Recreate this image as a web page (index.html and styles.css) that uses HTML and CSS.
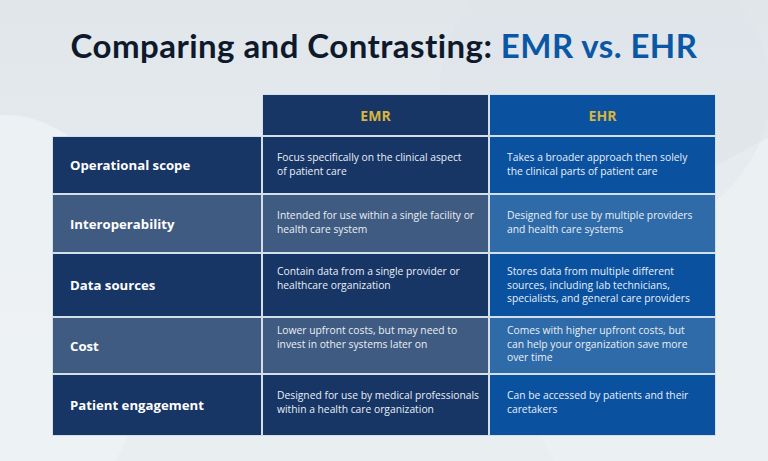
FILE: index.html
```html
<!DOCTYPE html>
<html lang="en">
<head>
<meta charset="utf-8">
<title>Comparing and Contrasting: EMR vs. EHR</title>
<link rel="stylesheet" href="styles.css">
</head>
<body>
<main class="page">
  <div class="bg-shape shape-a"></div>
  <div class="bg-shape shape-b"></div>
  <div class="bg-shape shape-c"></div>
  <h1 class="title">Comparing and Contrasting: <span class="accent">EMR vs. EHR</span></h1>
  <div class="table">
    <div class="corner"></div>
    <div class="cell head emr">EMR</div>
    <div class="cell head ehr">EHR</div>

    <div class="cell label dark">Operational scope</div>
    <div class="cell txt dark r1">Focus specifically on the clinical aspect<br>of patient care</div>
    <div class="cell txt ehr r1">Takes a broader approach then solely<br>the clinical parts of patient care</div>

    <div class="cell label light">Interoperability</div>
    <div class="cell txt light r2">Intended for use within a single facility or<br>health care system</div>
    <div class="cell txt ehr-light r2">Designed for use by multiple providers<br>and health care systems</div>

    <div class="cell label dark">Data sources</div>
    <div class="cell txt dark r3">Contain data from a single provider or<br>healthcare organization</div>
    <div class="cell txt ehr r3">Stores data from multiple different<br>sources, including lab technicians,<br>specialists, and general care providers</div>

    <div class="cell label light">Cost</div>
    <div class="cell txt light r4">Lower upfront costs, but may need to<br>invest in other systems later on</div>
    <div class="cell txt ehr-light r4">Comes with higher upfront costs, but<br>can help your organization save more<br>over time</div>

    <div class="cell label dark">Patient engagement</div>
    <div class="cell txt dark r5">Designed for use by medical professionals<br>within a health care organization</div>
    <div class="cell txt ehr r5">Can be accessed by patients and their<br>caretakers</div>
  </div>
</main>
</body>
</html>
```
FILE: styles.css
```css
* { box-sizing: border-box; }
html, body { margin: 0; padding: 0; }
body {
  width: 768px;
  height: 461px;
  overflow: hidden;
  font-family: "Open Sans", "Liberation Sans", sans-serif;
}
.page {
  position: relative;
  width: 768px;
  height: 461px;
  overflow: hidden;
  background: linear-gradient(180deg, #e0e6ea 0%, #e5ebee 50%, #e9eef1 100%);
  display: flex;
  flex-direction: column;
  align-items: flex-start;
}
.bg-shape { position: absolute; pointer-events: none; }
.shape-a {
  left: -140px; top: 115px;
  width: 290px; height: 420px;
  border-radius: 50%;
  background: #edf2f4;
  opacity: 0.85;
}
.shape-b {
  left: 560px; top: 170px;
  width: 420px; height: 500px;
  background: #ebf0f3;
  transform: rotate(-28deg);
}
.shape-c {
  left: 440px; top: -60px;
  width: 330px; height: 300px;
  border-radius: 50%;
  background: #dce3e7;
  opacity: 0.35;
}
.title {
  position: relative;
  margin: 26px 0 0 0;
  width: 768px;
  text-align: center;
  font-family: Lato, "Open Sans", sans-serif;
  font-weight: 700;
  font-size: 33px;
  line-height: 38px;
  color: #0e1a2c;
  letter-spacing: 0.45px;
}
.accent { color: #0a58a5; }
.table {
  position: relative;
  margin: 31px 0 0 53px;
  display: grid;
  grid-template-columns: 208px 225px 225px;
  grid-template-rows: 40px 56px 57px 62px 55px 60px;
  gap: 2px;
}
.cell {
  color: #f3f6fa;
  box-shadow: 0 0 0 1px #d3dfe9;
}
.head {
  display: flex;
  align-items: center;
  justify-content: center;
  font-weight: 700;
  font-size: 14px;
  color: #d8b53c;
}
.head.emr { background: #173565; }
.head.ehr { background: #0a51a0; }
.label {
  display: flex;
  align-items: center;
  padding-left: 17px;
  font-weight: 700;
  font-size: 13.2px;
  color: #ffffff;
}
.dark { background: #173565; }
.light { background: #405b81; }
.ehr { background: #0a51a0; }
.ehr-light { background: #2f6ba8; }
.txt {
  font-size: 10.3px;
  line-height: 13.5px;
  padding-left: 14px;
  white-space: nowrap;
  color: #e9eff6;
}
.txt.ehr, .txt.ehr-light { padding-left: 17px; }
.r1 { padding-top: 14px; }
.r2 { padding-top: 14px; }
.r3 { padding-top: 11px; }
.r4 { padding-top: 6px; }
.r5 { padding-top: 14px; }
```
